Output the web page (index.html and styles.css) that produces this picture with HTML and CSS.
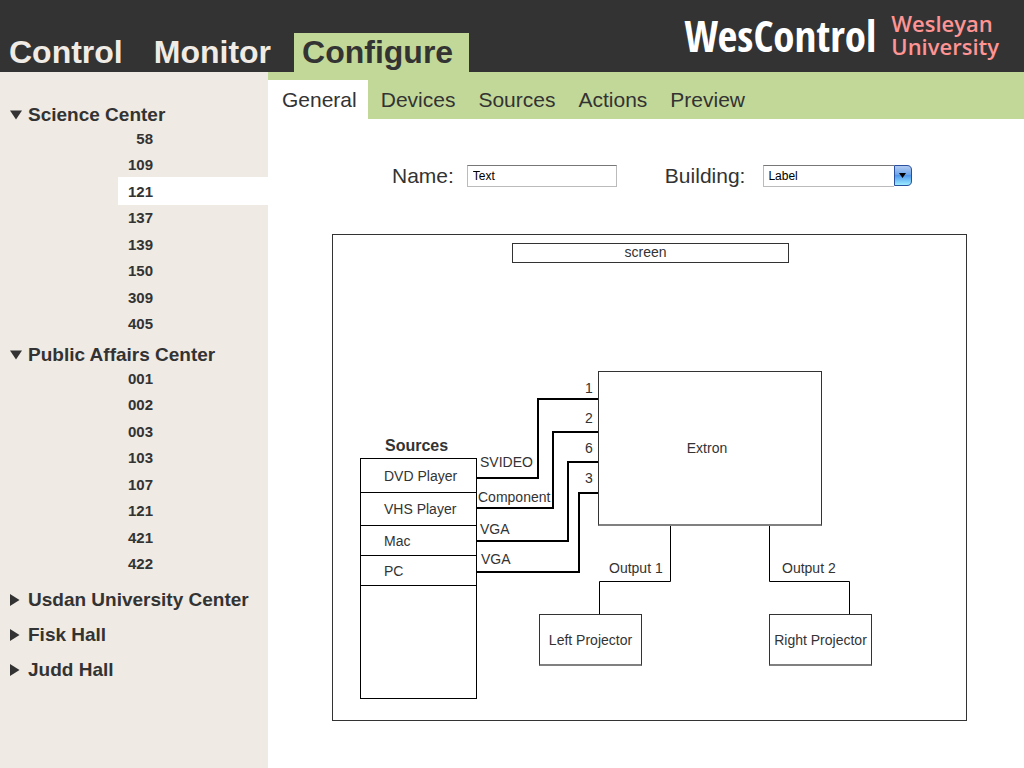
FILE: index.html
```html
<!DOCTYPE html>
<html lang="en">
<head>
<meta charset="utf-8">
<title>WesControl – Configure</title>
<link rel="stylesheet" href="styles.css">
</head>
<body>
<header class="masthead">
  <nav class="modes" aria-label="Modes">
    <a class="mode" href="#control">Control</a>
    <a class="mode" href="#monitor">Monitor</a>
    <a class="mode mode-active" href="#configure" aria-current="page">Configure</a>
  </nav>
  <div class="brand">
    <span class="brand-name">WesControl</span>
    <span class="brand-school">Wesleyan<br>University</span>
  </div>
</header>
<div class="workspace">
  <aside class="sidebar">
    <section class="building">
      <button class="building-toggle" type="button" aria-expanded="true"><svg class="arrow" viewBox="0 0 12 12" aria-hidden="true"><path d="M0 1.500H12L6 10.500Z"/></svg>Science Center</button>
      <ul class="rooms">
        <li><a class="room" href="#sc58">58</a></li>
        <li><a class="room" href="#sc109">109</a></li>
        <li><a class="room room-active" href="#sc121">121</a></li>
        <li><a class="room" href="#sc137">137</a></li>
        <li><a class="room" href="#sc139">139</a></li>
        <li><a class="room" href="#sc150">150</a></li>
        <li><a class="room" href="#sc309">309</a></li>
        <li><a class="room" href="#sc405">405</a></li>
      </ul>
    </section>
    <section class="building">
      <button class="building-toggle" type="button" aria-expanded="true"><svg class="arrow" viewBox="0 0 12 12" aria-hidden="true"><path d="M0 1.500H12L6 10.500Z"/></svg>Public Affairs Center</button>
      <ul class="rooms">
        <li><a class="room" href="#pac001">001</a></li>
        <li><a class="room" href="#pac002">002</a></li>
        <li><a class="room" href="#pac003">003</a></li>
        <li><a class="room" href="#pac103">103</a></li>
        <li><a class="room" href="#pac107">107</a></li>
        <li><a class="room" href="#pac121">121</a></li>
        <li><a class="room" href="#pac421">421</a></li>
        <li><a class="room" href="#pac422">422</a></li>
      </ul>
    </section>
    <section class="building building-closed">
      <button class="building-toggle" type="button" aria-expanded="false"><svg class="arrow" viewBox="0 0 12 12" aria-hidden="true"><path d="M0 0L9.500 6L0 12Z"/></svg>Usdan University Center</button>
    </section>
    <section class="building building-closed">
      <button class="building-toggle" type="button" aria-expanded="false"><svg class="arrow" viewBox="0 0 12 12" aria-hidden="true"><path d="M0 0L9.500 6L0 12Z"/></svg>Fisk Hall</button>
    </section>
    <section class="building building-closed">
      <button class="building-toggle" type="button" aria-expanded="false"><svg class="arrow" viewBox="0 0 12 12" aria-hidden="true"><path d="M0 0L9.500 6L0 12Z"/></svg>Judd Hall</button>
    </section>
  </aside>
  <main class="content">
    <nav class="tabs" aria-label="Configure">
      <a class="tab tab-active" href="#general" aria-current="page">General</a>
      <a class="tab" href="#devices">Devices</a>
      <a class="tab" href="#sources">Sources</a>
      <a class="tab" href="#actions">Actions</a>
      <a class="tab" href="#preview">Preview</a>
    </nav>
    <form class="fields">
      <div class="field">
        <label class="field-label" for="name">Name:</label>
        <input class="text-box" id="name" type="text" value="Text">
      </div>
      <div class="field field-building">
        <label class="field-label" for="building">Building:</label>
        <span class="combo">
          <select class="combo-box" id="building"><option>Label</option></select>
          <svg class="combo-arrow" viewBox="0 0 18 22" aria-hidden="true">
            <defs>
              <linearGradient id="aqua" x1="0" y1="0" x2="0" y2="1">
                <stop offset="0" stop-color="#b4cdf2"/>
                <stop offset="0.450" stop-color="#6fa6ea"/>
                <stop offset="0.500" stop-color="#4f98ee"/>
                <stop offset="1" stop-color="#9ff0ff"/>
              </linearGradient>
            </defs>
            <path d="M.5.5H13Q17.500.5 17.500 5V16Q17.500 20.500 13 20.500H.5Z" fill="url(#aqua)" stroke="#2a4f9c"/>
            <path d="M5 8H12L8.500 13Z" fill="#000"/>
          </svg>
        </span>
      </div>
    </form>
    <div class="diagram">
      <svg class="wires" viewBox="0 0 633 484" aria-hidden="true">
        <g class="wire-thick">
          <path d="M144 243H205V164H266"/>
          <path d="M144 273H220V197H266"/>
          <path d="M144 306H235V227H266"/>
          <path d="M144 337H246V258H266"/>
        </g>
        <g class="wire-thin">
          <path d="M337.500 290V346.500H266.500V380"/>
          <path d="M436.500 290V346.500H516.500V380"/>
        </g>
      </svg>
      <div class="node node-screen">screen</div>
      <div class="node node-extron">Extron</div>
      <div class="node node-left">Left Projector</div>
      <div class="node node-right">Right Projector</div>
      <section class="sources">
        <h2 class="sources-title">Sources</h2>
        <ul class="sources-list">
          <li class="source source-tall">DVD Player</li>
          <li class="source source-tall">VHS Player</li>
          <li class="source">Mac</li>
          <li class="source">PC</li>
        </ul>
      </section>
      <span class="tag tag-svideo">SVIDEO</span>
      <span class="tag tag-component">Component</span>
      <span class="tag tag-vga1">VGA</span>
      <span class="tag tag-vga2">VGA</span>
      <span class="tag tag-out1">Output 1</span>
      <span class="tag tag-out2">Output 2</span>
      <ol class="ports">
        <li>1</li>
        <li>2</li>
        <li>6</li>
        <li>3</li>
      </ol>
    </div>
  </main>
</div>
</body>
</html>
```
FILE: styles.css
```css
* {
  box-sizing: border-box;
}

body {
  margin: 0;
  min-height: 100vh;
  display: flex;
  flex-direction: column;
  background: #fff;
  color: #333;
  font-family: "Liberation Sans", Arial, sans-serif;
}

a {
  color: inherit;
  text-decoration: none;
}

ul,
ol {
  margin: 0;
  padding: 0;
  list-style: none;
}

/* Header */

.masthead {
  height: 72px;
  display: flex;
  justify-content: space-between;
  background: #333;
}

.modes {
  display: flex;
  align-items: flex-end;
  gap: 15px;
  padding-left: 1px;
}

.mode {
  height: 39px;
  padding: 0 8px;
  color: #f0ebe4;
  font-size: 32px;
  line-height: 38px;
  font-weight: bold;
}

.mode-active {
  padding-right: 16px;
  background: #c2d899;
  color: #333;
}

.brand {
  display: flex;
  gap: 15px;
  padding: 12px 25px 0 0;
}

.brand-name {
  color: #fff;
  font-family: "Open Sans Condensed", "Roboto Condensed", "Liberation Sans Narrow", "Liberation Sans", sans-serif;
  font-size: 43px;
  line-height: 48px;
  font-weight: bold;
}

.brand-school {
  color: #ff9494;
  font-family: "Open Sans", "Noto Sans", sans-serif;
  font-size: 22px;
  line-height: 23px;
  font-weight: 600;
}

.workspace {
  flex: 1;
  display: grid;
  grid-template-columns: 268px 1fr;
}

/* Sidebar */

.sidebar {
  padding-top: 31px;
  background: #efeae3;
}

.building-toggle {
  display: flex;
  align-items: center;
  gap: 6px;
  width: 100%;
  height: 24px;
  padding: 0 0 0 10px;
  border: 0;
  background: none;
  color: inherit;
  font: bold 19px/24px "Liberation Sans", Arial, sans-serif;
  white-space: nowrap;
}

.arrow {
  width: 12px;
  height: 12px;
  fill: #333;
}

.rooms {
  display: flex;
  flex-direction: column;
  justify-content: space-between;
  min-height: 211px;
  margin-top: -1px;
  margin-bottom: 6px;
}

.room {
  display: block;
  margin-left: 118px;
  padding-right: 115px;
  font-size: 15px;
  line-height: 26px;
  font-weight: bold;
  text-align: right;
}

.room-active {
  margin-top: -2px;
  padding-top: 2px;
  background: #fff;
}

.building-closed {
  margin-top: 11px;
}

/* Main column */

.tabs {
  display: flex;
  gap: 3px;
  height: 47px;
  padding-top: 8px;
  background: #c2d899;
}

.tab {
  padding: 0 10px;
  font-size: 21px;
  line-height: 40px;
}

.tab-active {
  padding: 0 11px 0 14px;
  background: #fff;
}

.fields {
  display: flex;
  gap: 48px;
  padding: 45px 57px 0 124px;
}

.field {
  display: flex;
  align-items: center;
  gap: 13px;
}

.field-building {
  gap: 18px;
}

.field-label {
  font-size: 21px;
  line-height: 24px;
}

.text-box,
.combo-box {
  width: 150px;
  height: 22px;
  padding: 0 5px;
  border: 1px solid #bbb;
  border-top-color: #777;
  border-radius: 0;
  background: #fff;
  color: #000;
  font: 12px/20px "Liberation Sans", Arial, sans-serif;
}

.combo {
  position: relative;
  display: block;
  height: 22px;
}

.combo-box {
  display: block;
  width: 149px;
  padding: 0 20px 0 4px;
  border-right: 0;
  appearance: none;
}

.combo-arrow {
  position: absolute;
  top: 0;
  right: 0;
  width: 18px;
  height: 22px;
  background: #fff;
  pointer-events: none;
}

/* Room diagram: a free canvas */

.diagram {
  position: relative;
  height: 487px;
  margin: 46px 57px 47px 64px;
  border: 1px solid #333;
  font-size: 14px;
  line-height: 16px;
}

.wires {
  position: absolute;
  top: 0;
  left: 0;
  width: 633px;
  height: 484px;
  fill: none;
  stroke: #000;
}

.wire-thick {
  stroke-width: 2;
}

.wire-thin {
  stroke-width: 1;
}

.node {
  position: absolute;
  display: flex;
  align-items: center;
  justify-content: center;
  border: 1px solid #333;
  background: #fff;
  white-space: nowrap;
}

.node-screen {
  top: 8px;
  left: 179px;
  width: 277px;
  height: 20px;
  padding: 0 10px 2px 0;
}

.node-extron {
  top: 136px;
  left: 265px;
  width: 224px;
  height: 155px;
  padding-right: 6px;
}

.node-left,
.node-right {
  top: 379px;
  width: 103px;
  height: 52px;
}

.node-extron,
.node-left,
.node-right {
  border-bottom: 2px solid #808080;
}

.node-left {
  left: 206px;
}

.node-right {
  left: 436px;
}

.sources {
  position: absolute;
  top: 202px;
  left: 27px;
  width: 117px;
}

.sources-title {
  margin: 0;
  padding: 0 0 3px 25px;
  font-size: 16px;
  line-height: 18px;
}

.sources-list {
  height: 241px;
  padding-top: 1px;
  border: 1px solid #000;
}

.source {
  height: 30px;
  padding-left: 23px;
  border-bottom: 1px solid #000;
  line-height: 30px;
}

.source-tall {
  height: 33px;
  line-height: 33px;
}

.tag {
  position: absolute;
}

.tag-svideo {
  top: 219px;
  left: 147px;
}

.tag-component {
  top: 254px;
  left: 145px;
}

.tag-vga1 {
  top: 286px;
  left: 147px;
}

.tag-vga2 {
  top: 316px;
  left: 148px;
}

.tag-out1 {
  top: 325px;
  left: 276px;
}

.tag-out2 {
  top: 325px;
  left: 449px;
}

.ports {
  position: absolute;
  top: 138px;
  left: 252px;
  line-height: 30px;
}
```
